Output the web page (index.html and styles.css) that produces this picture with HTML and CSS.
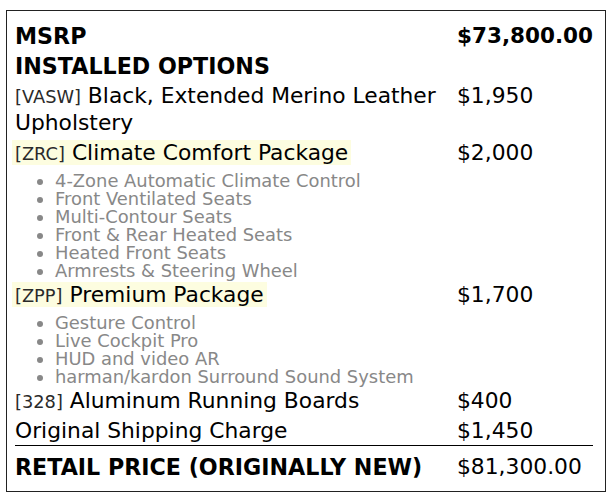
FILE: index.html
```html
<!DOCTYPE html>
<html lang="en">
<head>
<meta charset="utf-8">
<title>Window sticker</title>
<link rel="stylesheet" href="styles.css">
</head>
<body>
<div class="card">
  <div class="row head">
    <div class="label">MSRP</div>
    <div class="price">$73,800.00</div>
  </div>
  <div class="row head">
    <div class="label">INSTALLED OPTIONS</div>
    <div class="price"></div>
  </div>
  <div class="row">
    <div class="label"><span class="code">[VASW]</span> Black, Extended Merino Leather Upholstery</div>
    <div class="price">$1,950</div>
  </div>
  <div class="row">
    <div class="label"><span class="hl"><span class="code">[ZRC]</span> Climate Comfort Package</span></div>
    <div class="price">$2,000</div>
  </div>
  <ul class="feats">
    <li>4-Zone Automatic Climate Control</li>
    <li>Front Ventilated Seats</li>
    <li>Multi-Contour Seats</li>
    <li>Front &amp; Rear Heated Seats</li>
    <li>Heated Front Seats</li>
    <li>Armrests &amp; Steering Wheel</li>
  </ul>
  <div class="row">
    <div class="label"><span class="hl"><span class="code">[ZPP]</span> Premium Package</span></div>
    <div class="price">$1,700</div>
  </div>
  <ul class="feats">
    <li>Gesture Control</li>
    <li>Live Cockpit Pro</li>
    <li>HUD and video AR</li>
    <li>harman/kardon Surround Sound System</li>
  </ul>
  <div class="row">
    <div class="label"><span class="code">[328]</span> Aluminum Running Boards</div>
    <div class="price">$400</div>
  </div>
  <div class="row tight">
    <div class="label">Original Shipping Charge</div>
    <div class="price">$1,450</div>
  </div>
  <div class="row total">
    <div class="label">RETAIL PRICE (ORIGINALLY NEW)</div>
    <div class="price">$81,300.00</div>
  </div>
</div>
</body>
</html>
```
FILE: styles.css
```css
html, body {
  margin: 0;
  padding: 0;
  background: #fff;
}

body {
  font-family: "DejaVu Sans", "Liberation Sans", sans-serif;
  color: #000;
}

.card {
  box-sizing: border-box;
  width: 600px;
  margin: 10px 0 0 6px;
  padding: 10px 12px 9px 8px;
  border: 1px solid #222;
}

.row {
  display: grid;
  grid-template-columns: 1fr 136px;
  padding: 2px 0;
  font-size: 21.8px;
  line-height: 26px;
}

.row .label {
  padding-right: 10px;
}

.row.head {
  font-weight: bold;
}

.row.head .label,
.row.total .label {
  font-size: 22.2px;
}

.row.head .price {
  font-size: 21.5px;
}

.row.tight {
  padding: 1px 0;
}

.row.total {
  padding-top: 8px;
  border-top: 1px solid #000;
  font-weight: bold;
}

.row.total .price {
  font-weight: normal;
}

.code {
  font-size: 17.8px;
  color: #2a2a2a;
}

.hl {
  background: #fdfde0;
  margin-left: -3px;
  padding: 0 3px;
}

.feats {
  margin: 0;
  padding: 3px 0 0 40px;
  list-style: disc;
  color: #888;
  font-size: 17.9px;
  line-height: 18px;
}
```
